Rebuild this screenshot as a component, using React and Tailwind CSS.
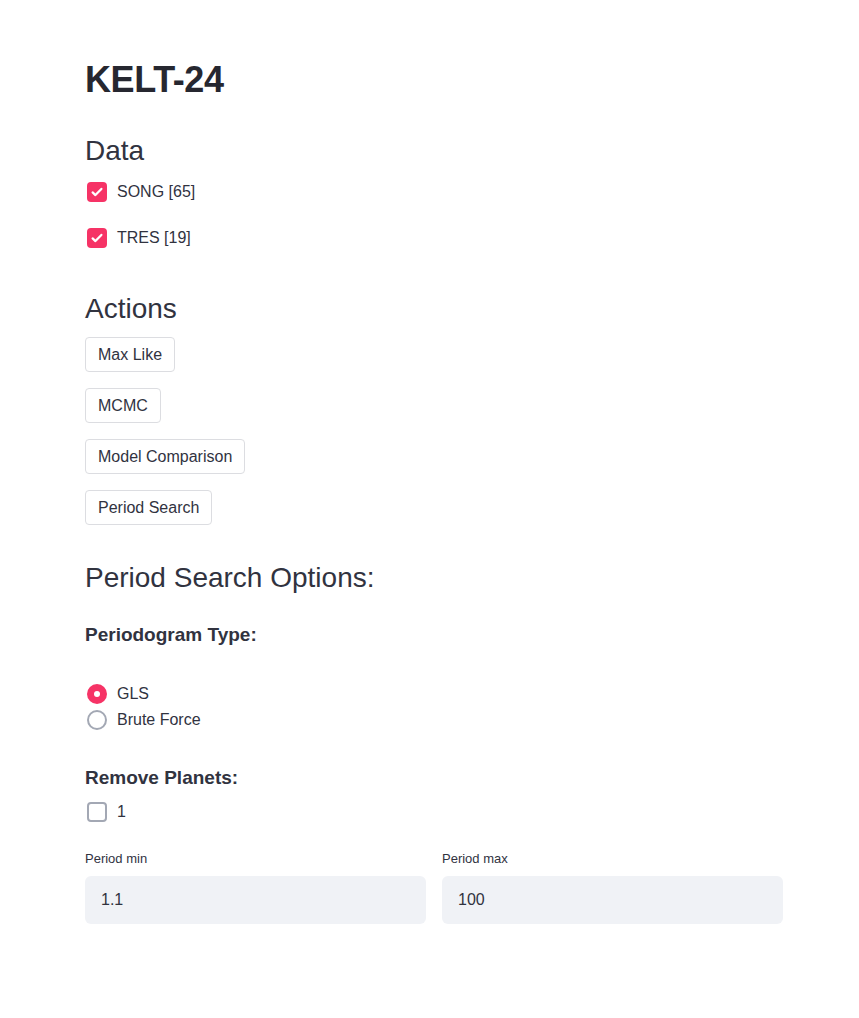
import React, { useState } from 'react';

const Check = ({ checked, label, onToggle }) => (
  <label className="flex items-center h-5 ml-[2px] cursor-pointer" onClick={onToggle}>
    <span
      className={`w-5 h-5 rounded-[4px] flex items-center justify-center ${
        checked ? 'bg-[#f63366]' : 'border-2 border-[#a3a8b4] bg-white'
      }`}
    >
      {checked && (
        <svg viewBox="0 0 16 16" className="w-3.5 h-3.5" fill="none" stroke="white" strokeWidth={2.6} strokeLinecap="round" strokeLinejoin="round">
          <path d="M3 8.5l3.2 3L13 4.5" />
        </svg>
      )}
    </span>
    <span className="ml-2.5 text-base">{label}</span>
  </label>
);

const Radio = ({ checked, label, onSelect }) => (
  <label className="flex items-center h-[26px] ml-[2px] cursor-pointer" onClick={onSelect}>
    <span
      className={`w-5 h-5 rounded-full flex items-center justify-center ${
        checked ? 'bg-[#f63366]' : 'border-2 border-[#a3a8b4] bg-white'
      }`}
    >
      {checked && <span className="w-1.5 h-1.5 rounded-full bg-white" />}
    </span>
    <span className="ml-2.5 text-base">{label}</span>
  </label>
);

const App = () => {
  const [song, setSong] = useState(true);
  const [tres, setTres] = useState(true);
  const [planet, setPlanet] = useState(false);
  const [ptype, setPtype] = useState('GLS');
  const [pmin, setPmin] = useState('1.1');
  const [pmax, setPmax] = useState('100');

  const actions = ['Max Like', 'MCMC', 'Model Comparison', 'Period Search'];

  return (
    <div className="min-h-screen bg-white text-[#31333f]" style={{ fontFamily: '"Liberation Sans", Arial, sans-serif' }}>
      <div className="pl-[85px] pt-[58px] w-[783px]">
        {/* Title */}
        <h1 className="text-[36px] leading-[44px] font-bold tracking-[-0.4px] text-[#262730]">KELT-24</h1>

        {/* Data */}
        <h3 className="mt-[31px] text-[28px] leading-[36px]">Data</h3>
        <div className="mt-[13px] flex flex-col gap-[26px]">
          <Check checked={song} label="SONG [65]" onToggle={() => setSong(!song)} />
          <Check checked={tres} label="TRES [19]" onToggle={() => setTres(!tres)} />
        </div>

        {/* Actions */}
        <h3 className="mt-[43px] text-[28px] leading-[36px]">Actions</h3>
        <div className="mt-[10px] flex flex-col gap-[16px] items-start">
          {actions.map((a) => (
            <button
              key={a}
              className="h-[35px] px-[12px] border border-[#dcdde1] rounded-[4px] bg-white text-base hover:border-[#f63366] hover:text-[#f63366]"
            >
              {a}
            </button>
          ))}
        </div>

        {/* Period search options */}
        <h3 className="mt-[35px] text-[28px] leading-[36px]">Period Search Options:</h3>
        <h4 className="mt-[27px] text-[19px] leading-[24px] font-bold">Periodogram Type:</h4>
        <div className="mt-[34px] flex flex-col">
          {['GLS', 'Brute Force'].map((o) => (
            <Radio key={o} checked={ptype === o} label={o} onSelect={() => setPtype(o)} />
          ))}
        </div>

        <h4 className="mt-[33px] text-[19px] leading-[24px] font-bold">Remove Planets:</h4>
        <div className="mt-[12px]">
          <Check checked={planet} label="1" onToggle={() => setPlanet(!planet)} />
        </div>

        {/* Inputs */}
        <div className="mt-[29px] grid grid-cols-2 gap-4 w-[698px]">
          <div>
            <div className="text-[13px] leading-[16px]">Period min</div>
            <input
              className="mt-[9px] w-full h-[48px] rounded-[6px] bg-[#f0f2f6] px-4 text-base outline-none"
              value={pmin}
              onChange={(e) => setPmin(e.target.value)}
            />
          </div>
          <div>
            <div className="text-[13px] leading-[16px]">Period max</div>
            <input
              className="mt-[9px] w-full h-[48px] rounded-[6px] bg-[#f0f2f6] px-4 text-base outline-none"
              value={pmax}
              onChange={(e) => setPmax(e.target.value)}
            />
          </div>
        </div>
      </div>
    </div>
  );
};

export default App;
